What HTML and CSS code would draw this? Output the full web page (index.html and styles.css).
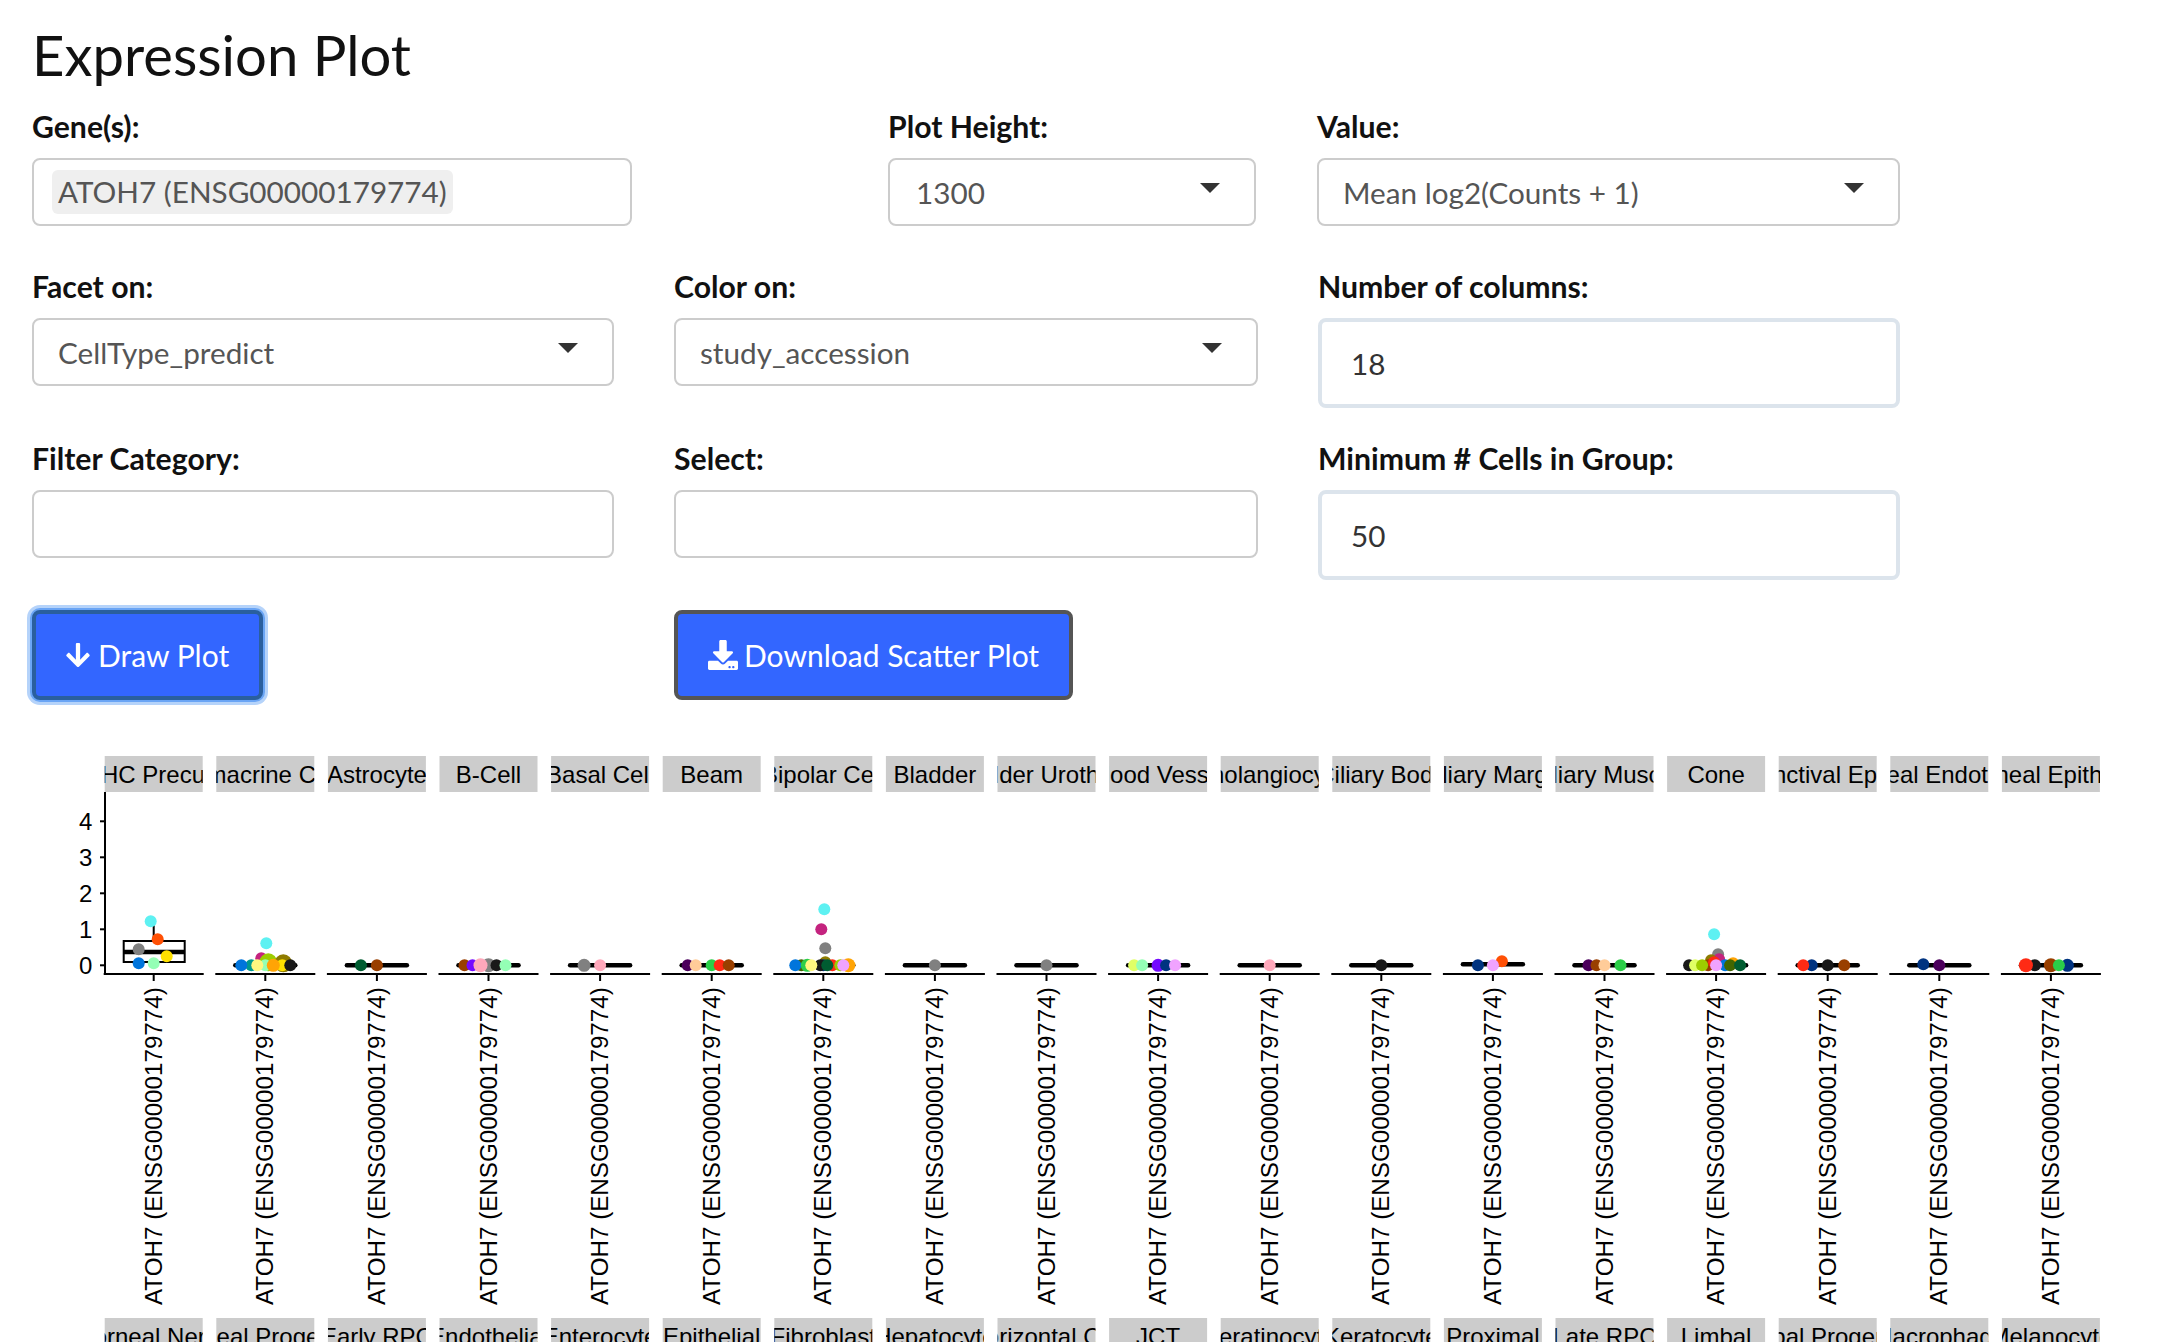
FILE: index.html
```html
<!DOCTYPE html>
<html lang="en">
<head>
  <meta charset="UTF-8" />
  <meta name="viewport" content="width=device-width, initial-scale=1.0" />
  <title>Expression Plot</title>
  <link rel="stylesheet" href="styles.css">
</head>
<body>
  <h2>Expression Plot</h2>
  <form id="plotForm">
    <div class="row row-top">
      <div class="field col-gene">
        <label>Gene(s):</label>
        <div class="box"><span class="chip">ATOH7 (ENSG00000179774)</span></div>
      </div>
      <div class="field col-height">
        <label>Plot Height:</label>
        <div class="box select"><span>1300</span><i class="caret"></i></div>
      </div>
      <div class="field col-value">
        <label>Value:</label>
        <div class="box select"><span>Mean log2(Counts + 1)</span><i class="caret"></i></div>
      </div>
    </div>
    <div class="row">
      <div class="field col-a">
        <label>Facet on:</label>
        <div class="box select"><span>CellType_predict</span><i class="caret"></i></div>
      </div>
      <div class="field col-b">
        <label>Color on:</label>
        <div class="box select"><span>study_accession</span><i class="caret"></i></div>
      </div>
      <div class="field col-c">
        <label>Number of columns:</label>
        <div class="box number">18</div>
      </div>
    </div>
    <div class="row">
      <div class="field col-a">
        <label>Filter Category:</label>
        <div class="box"></div>
      </div>
      <div class="field col-b">
        <label>Select:</label>
        <div class="box"></div>
      </div>
      <div class="field col-c">
        <label>Minimum # Cells in Group:</label>
        <div class="box number">50</div>
      </div>
    </div>
    <div class="row row-buttons">
      <div class="col-a">
        <button type="button" class="btn btn-focus">
          <svg class="icon-arrow" viewBox="0 0 448 512"><path fill="currentColor" d="M413.1 222.5l22.2 22.2c9.4 9.4 9.4 24.6 0 33.9L241 473c-9.4 9.4-24.6 9.4-33.9 0L12.7 278.6c-9.4-9.4-9.4-24.6 0-33.9l22.2-22.2c9.5-9.5 25-9.3 34.3.4L184 343.4V56c0-13.3 10.7-24 24-24h32c13.3 0 24 10.7 24 24v287.4l114.8-120.5c9.3-9.8 24.8-10 34.3-.4z"/></svg>
          Draw Plot
        </button>
      </div>
      <div class="col-b">
        <button type="button" class="btn">
          <svg class="icon-download" viewBox="0 0 512 512"><path fill="currentColor" d="M216 0h80c13.3 0 24 10.7 24 24v168h87.7c17.8 0 26.7 21.5 14.1 34.1L269.7 378.3c-7.5 7.5-19.8 7.5-27.3 0L90.1 226.1c-12.6-12.6-3.7-34.1 14.1-34.1H192V24c0-13.3 10.7-24 24-24zm296 376v112c0 13.3-10.7 24-24 24H24c-13.3 0-24-10.7-24-24V376c0-13.3 10.7-24 24-24h146.7l49 49c20.1 20.1 52.5 20.1 72.6 0l49-49H488c13.3 0 24 10.7 24 24zm-124 88c0-11-9-20-20-20s-20 9-20 20 9 20 20 20 20-9 20-20zm64 0c0-11-9-20-20-20s-20 9-20 20 9 20 20 20 20-9 20-20z"/></svg>
          Download Scatter Plot
        </button>
      </div>
    </div>
  </form>

  <div id="plot"></div>

  <script src="plot.js"></script>
</body>
</html>
```

FILE: styles.css
```css
html, body {
  margin: 0;
  background: #fff;
}
body {
  font-family: Lato, "Open Sans", sans-serif;
  color: #111;
  overflow: hidden;
}
h2 {
  margin: 0;
  padding: 23px 0 0 32px;
  height: 94px;
  box-sizing: border-box;
  font-size: 56.2px;
  line-height: 64px;
  font-weight: 400;
}
form {
  padding-left: 32px;
  padding-top: 24px;
}
.row {
  display: flex;
  margin-bottom: 42px;
}
.row-top {
  margin-bottom: 52px;
}
.row-buttons {
  margin-top: -12px;
  margin-bottom: 40px;
}
label {
  display: block;
  height: 40px;
  font-size: 30.2px;
  line-height: 17px;
  font-weight: 700;
}
.box {
  box-sizing: border-box;
  height: 68px;
  border: 2px solid #ccc;
  border-radius: 8px;
  background: #fff;
  padding: 0 24px;
  display: flex;
  align-items: center;
  font-size: 29.7px;
  color: #555;
}
.col-gene { width: 856px; }
.col-gene .box { width: 600px; padding: 0 18px; }
.col-height { width: 429px; }
.col-height .box { width: 368px; padding-left: 26px; }
.col-value { width: 583px; }
.col-a { width: 642px; }
.col-a .box { width: 582px; }
.col-b { width: 644px; }
.col-b .box { width: 584px; }
.col-c { width: 582px; }
.select {
  justify-content: space-between;
  padding-right: 34px;
}
.caret {
  width: 0;
  height: 0;
  margin-top: -8px;
  border-left: 10px solid transparent;
  border-right: 10px solid transparent;
  border-top: 10px solid #333;
}
.chip {
  background: #efefef;
  border-radius: 6px;
  padding: 3px 6px;
  line-height: 38px;
}
.number {
  height: 90px;
  border: 4px solid #dce4ec;
  padding: 0 29px;
  color: #333;
}
.btn {
  display: inline-flex;
  align-items: center;
  height: 90px;
  padding: 0 30px;
  box-sizing: border-box;
  background: #3366ff;
  color: #fff;
  border: 4px solid #555;
  border-radius: 8px;
  font-family: inherit;
  font-size: 30px;
}
.btn-focus {
  border-color: #2a5f9e;
  box-shadow: 0 0 0 2px #6aa5f5, 0 0 0 5px #b5d3fa;
}
.icon-arrow {
  width: 24px;
  height: 28px;
  margin-right: 8px;
}
.icon-download {
  width: 30px;
  height: 30px;
  margin-right: 6px;
}
#plot svg {
  display: block;
}
.strip { fill: #ccc; }
.strip-text {
  font-family: "Liberation Sans", Arial, sans-serif;
  font-size: 24px;
  fill: #000;
  text-anchor: middle;
}
.axis-text {
  font-family: "Liberation Sans", Arial, sans-serif;
  font-size: 24px;
  fill: #000;
}
.x-label { font-size: 24.2px; }
.axis { stroke: #000; stroke-width: 2; }
.bar { stroke: #000; stroke-width: 4.5; stroke-linecap: round; }
.median { stroke: #000; stroke-width: 4.5; }
.box-frame { fill: none; stroke: #000; stroke-width: 2; }
```

FILE: plot.js
```js
// facet panels of the expression plot, drawn in page coordinates
const c = {
  cyan: '#5ef1f2', orange: '#ff5005', gray: '#808080', yellow: '#ffe100', blue: '#0075dc',
  mint: '#94ffb5', magenta: '#c4237f', lime: '#9dcc00', olive: '#8f7c00', teal: '#00998f',
  pale: '#fff780', amber: '#ffa405', black: '#191919', forest: '#005c31', brown: '#993f00',
  purple: '#740aff', pink: '#ffa8bb', plum: '#4c005c', peach: '#ffcc99', green: '#2bce48',
  red: '#ff2a14', violet: '#f0a3ff', navy: '#003380', moss: '#426600', citron: '#e0ff66'
};

const LEFT = 153.7, PITCH = 111.6, BASE = 965.3;

// each dot: [dx, dy, colour, radius]
const panels = [
  { name: 'AC/HC Precursor', dots: [[-3, -44, c.cyan], [4, -26, c.orange], [-15, -16, c.gray], [13, -9, c.yellow], [-15, -2, c.blue], [0, -2, c.mint]] },
  { name: 'Amacrine Cell', dots: [[-4, -7, c.magenta], [3, -3, c.lime, 9], [18, -2, c.olive, 9], [1, -22, c.cyan], [-14, 0, c.teal], [-24, 0, c.blue], [0, 0, c.mint], [-8, 0, c.pale], [17, 0, c.yellow], [8, 0, c.amber, 6.5], [25, 0, c.black]] },
  { name: 'Astrocyte', dots: [[-16, 0, c.forest], [0, 0, c.brown]] },
  { name: 'B-Cell', dots: [[0, 0, c.gray, 7], [-24, 0, c.brown], [-16, 0, c.purple], [-8, 0, c.pink, 7], [8, 0, c.black], [17, 0, c.mint]] },
  { name: 'Basal Cell', dots: [[-16, 0, c.gray, 6.5], [0, 0, c.pink]] },
  { name: 'Beam', dots: [[-24, 0, c.plum], [-16, 0, c.peach], [0, 0, c.green], [8, 0, c.red], [17, 0, c.brown]] },
  { name: 'Bipolar Cell', dots: [[1, -56, c.cyan], [-2, -36, c.magenta], [2, -17, c.gray], [-22, 0, c.moss], [-28, 0, c.blue], [-16, 0, c.green, 6.5], [2, -3, c.olive], [0, 0, c.navy], [-3, 0, c.black], [9, 0, c.red], [17, 0, c.lime], [25, 0, c.amber, 7], [20, 0, c.violet], [-12, 0, c.pale], [4, 0, c.forest]] },
  { name: 'Bladder', dots: [[0, 0, c.gray]] },
  { name: 'Bladder Urothelial', dots: [[0, 0, c.gray]] },
  { name: 'Blood Vessel', dots: [[-24, 0, c.citron], [-16, 0, c.mint], [0, 0, c.purple, 6.5], [8, 0, c.navy], [17, 0, c.violet]] },
  { name: 'Cholangiocyte', dots: [[0, 0, c.pink]] },
  { name: 'Ciliary Body', dots: [[0, 0, c.black, 6]] },
  { name: 'Ciliary Margin', dots: [[-15, 0, c.navy], [9, -4, c.orange], [0, 0, c.violet]], barDy: -1 },
  { name: 'Ciliary Muscle', dots: [[-16, 0, c.plum], [-8, 0, c.brown], [0, 0, c.peach], [16, 0, c.green]] },
  { name: 'Cone', dots: [[-2, -31, c.cyan], [2, -11, c.gray], [3, -6, c.magenta], [-5, -5, c.olive], [17, -2, c.amber], [-27, 0, c.black], [-8, 0, c.brown], [-2, -3, c.red], [-21, 0, c.citron], [-14, 0, c.lime], [9, 0, c.blue], [0, 0, c.violet], [14, 0, c.moss], [24, 0, c.forest]] },
  { name: 'Conjunctival Epithelial', dots: [[-16, 0, c.navy], [-24.5, 0, c.red], [0, 0, c.black], [16.5, 0, c.brown]] },
  { name: 'Corneal Endothelial', dots: [[-16, -1, c.navy], [0, 0, c.plum]] },
  { name: 'Corneal Epithelial', dots: [[-16, 0, c.black], [-25, 0, c.red, 7], [16.5, 0, c.navy, 6.5], [0, 0, c.brown, 7], [8, 0, c.green]] }
];

const lower = ['Corneal Nerve', 'Corneal Progenitor', 'Early RPC', 'Endothelial', 'Enterocyte', 'Epithelial',
  'Fibroblast', 'Hepatocyte', 'Horizontal Cell', 'JCT', 'Keratinocyte', 'Keratocyte', 'Proximal', 'Late RPC',
  'Limbal', 'Limbal Progenitor', 'Macrophage', 'Melanocyte'];

function strip(cx, y, name, id) {
  return `
    <clipPath id="clip${id}"><rect x="${cx - 49}" y="${y}" width="98" height="36"/></clipPath>
    <rect class="strip" x="${cx - 49}" y="${y}" width="98" height="36"/>
    <text class="strip-text" x="${cx}" y="${y + 27}" clip-path="url(#clip${id})">${name}</text>`;
}

function panel(p, i) {
  const cx = LEFT + i * PITCH;
  const barY = BASE + (p.barDy || 0);
  let out = strip(cx, 756, p.name, 'a' + i);
  out += `<line class="axis" x1="${cx - 50}" x2="${cx + 50}" y1="974" y2="974"/>`;
  out += `<line class="axis" x1="${cx}" x2="${cx}" y1="974" y2="981"/>`;
  if (i === 0) {
    // only the first panel has a real box, the others collapse to their median
    out += `<line class="axis" x1="${cx}" x2="${cx}" y1="921" y2="941"/>`;
    out += `<rect class="box-frame" x="${cx - 30}" y="941" width="61" height="21"/>`;
    out += `<line class="median" x1="${cx - 30}" x2="${cx + 31}" y1="952" y2="952"/>`;
  } else {
    out += `<line class="bar" x1="${cx - 30}" x2="${cx + 30}" y1="${barY}" y2="${barY}"/>`;
  }
  p.dots.forEach(d => {
    out += `<circle cx="${cx + d[0]}" cy="${BASE + d[1]}" r="${d[3] || 6}" fill="${d[2]}"/>`;
  });
  out += `<text class="axis-text x-label" transform="translate(${cx + 8} 1305) rotate(-90)">ATOH7 (ENSG00000179774)</text>`;
  out += strip(cx, 1318, lower[i], 'b' + i);
  return out;
}

let svg = '<svg width="2160" height="602" viewBox="0 740 2160 602">';
svg += '<line class="axis" x1="105" x2="105" y1="792" y2="975"/>';
[0, 1, 2, 3, 4].forEach(v => {
  const y = BASE - v * 36;
  svg += `<line class="axis" x1="100" x2="105" y1="${y}" y2="${y}"/>`;
  svg += `<text class="axis-text" x="79" y="${y + 9}">${v}</text>`;
});
svg += panels.map(panel).join('');
svg += '</svg>';
document.getElementById('plot').innerHTML = svg;
```
